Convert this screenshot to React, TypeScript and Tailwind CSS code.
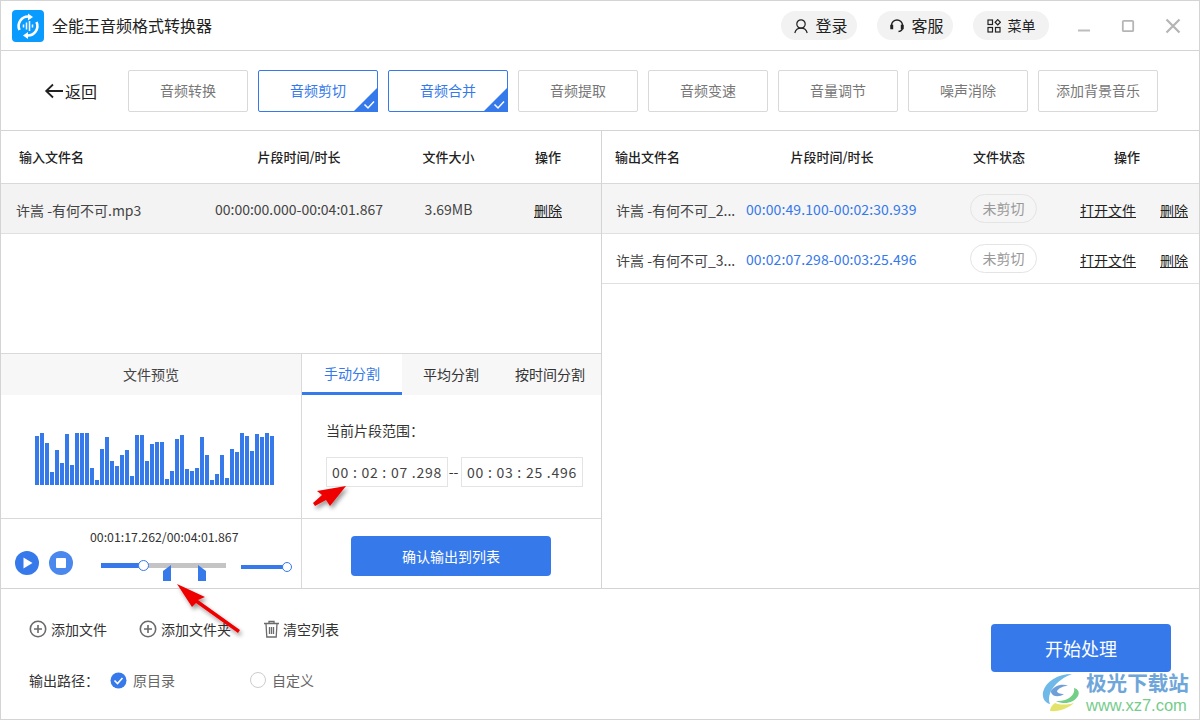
import React from "react";

const bars = [49,52,42,13,35,22,51,20,52,52,52,17,5,36,48,24,19,30,35,9,50,50,24,41,43,43,6,14,46,50,16,14,17,48,30,5,11,30,7,36,33,52,49,34,51,48,52,49];

const tools = [
  { t: "音频转换" },
  { t: "音频剪切", on: true },
  { t: "音频合并", on: true },
  { t: "音频提取" },
  { t: "音频变速" },
  { t: "音量调节" },
  { t: "噪声消除" },
  { t: "添加背景音乐" },
];

function Plus() {
  return (
    <svg width="18" height="18" viewBox="0 0 18 18" fill="none" stroke="#6b6b6b" strokeWidth="1.6">
      <circle cx="9" cy="9" r="7.7" />
      <path d="M9 5v8M5 9h8" />
    </svg>
  );
}

function Tool({ t, on }: { t: string; on?: boolean }) {
  return (
    <div className={`relative w-[120px] h-[42px] rounded-[2px] border flex items-center justify-center text-[14px] ${on ? "border-[#3579ea] text-[#3579ea]" : "border-[#d9d9d9] text-[#777777]"}`}>
      {t}
      {on && (
        <svg className="absolute right-[-1px] bottom-[-1px]" width="25" height="25" viewBox="0 0 25 25">
          <path d="M25 0V25H0Z" fill="#3579ea" />
          <path d="M11.5 17.5l3.5 3.5 6-6.5" fill="none" stroke="#ffffff" strokeWidth="1.5" />
        </svg>
      )}
    </div>
  );
}

function OutRow({ name, time, grey }: { name: string; time: string; grey?: boolean }) {
  return (
    <div className={`h-[50px] border-b border-[#e0e0e0] flex items-center text-[14px] text-[#444444] ${grey ? "bg-[#f5f5f5]" : "bg-white"}`}>
      <div className="w-[144px] pl-[14px] pt-[3px] whitespace-nowrap overflow-hidden">{name}</div>
      <div className="w-[176px] pt-[1px] text-[#3579ea] whitespace-nowrap tracking-[0.1px]">{time}</div>
      <div className="w-[154px] pl-[48px]">
        <span className="w-[67px] h-[29px] rounded-full border border-[#e4e4e4] text-[#999999] flex items-center justify-center">未剪切</span>
      </div>
      <div className="w-[64px] pt-[3px] text-center text-[#222222] underline whitespace-nowrap">打开文件</div>
      <div className="flex-1 pl-[20px] pt-[3px] text-[#222222] underline">删除</div>
    </div>
  );
}

function Pill({ icon, label, small }: { icon: React.ReactNode; label: string; small?: boolean }) {
  return (
    <div className={`w-[76px] h-[29px] rounded-full bg-[#f2f2f2] flex items-center justify-center text-[#222222] ${small ? "text-[14px] gap-[7px]" : "text-[16px] gap-[6px] pl-[3px]"}`}>
      {icon}
      <span className="-mt-[1px]">{label}</span>
    </div>
  );
}

export default function App() {
  return (
    <div
      className="relative w-[1200px] h-[720px] bg-white border border-[#d4d4d4] overflow-hidden flex flex-col text-[#333333]"
      style={{ fontFamily: '"Noto Sans CJK SC", "Liberation Sans", sans-serif' }}
    >
      {/* title bar */}
      <div className="h-[50px] shrink-0 border-b border-[#d4d4d4] flex items-center pl-[11px]">
        <svg width="32" height="32" viewBox="0 0 32 32">
          <rect width="32" height="32" rx="4" fill="#0a9bff" />
          <path d="M7.500 20A9.500 9.500 0 0 1 17 6.600" fill="none" stroke="#ffffff" strokeWidth="2.600" />
          <path d="M24.500 12A9.500 9.500 0 0 1 15 25.400" fill="none" stroke="#ffffff" strokeWidth="2.600" />
          <path d="M16 3.500l5 3.500-5 3.500Z" fill="#ffffff" />
          <path d="M16 22l-5 3.500 5 3.500Z" fill="#ffffff" />
          <path d="M11.500 14.500v3M14.500 12.500v7M17.500 11v10M20.500 14.500v3" stroke="#ffffff" strokeWidth="1.500" fill="none" />
        </svg>
        <div className="ml-[8px] -mt-[1px] text-[16px] text-[#222222]">全能王音频格式转换器</div>
        <div className="ml-auto flex items-center gap-[20px]">
          <Pill
            label="登录"
            icon={
              <svg width="16" height="16" viewBox="0 0 16 16" fill="none" stroke="#222222" strokeWidth="1.2">
                <circle cx="8" cy="6" r="4.2" />
                <path d="M1.8 15c.8-3.2 3-4.8 6.2-4.8s5.400 1.600 6.200 4.800" />
              </svg>
            }
          />
          <Pill
            label="客服"
            icon={
              <svg width="16" height="16" viewBox="0 0 16 16" fill="none" stroke="#222222" strokeWidth="1.4">
                <path d="M2.500 9.500V7.500a5.500 5.500 0 0 1 11 0v2c0 2.500-1.500 3.800-4 4" />
                <path d="M2 7.500h1.500v3H2zM12.500 7.500H14v3h-1.500z" fill="#222222" />
              </svg>
            }
          />
          <Pill
            small
            label="菜单"
            icon={
              <svg width="14" height="14" viewBox="0 0 14 14" fill="none" stroke="#222222" strokeWidth="1.2">
                <rect x="1" y="1" width="4.500" height="4.500" />
                <rect x="1" y="8.500" width="4.500" height="4.500" />
                <rect x="8.500" y="8.500" width="4.500" height="4.500" />
                <path d="M10.750 .6l2.650 2.650-2.650 2.650-2.650-2.650z" />
              </svg>
            }
          />
        </div>
        <div className="ml-[28px] mr-[18px] flex items-center gap-[30px]">
          <svg width="14" height="14" viewBox="0 0 14 14"><path d="M1 11.500h12" stroke="#bdbdbd" strokeWidth="2" /></svg>
          <svg width="14" height="14" viewBox="0 0 14 14" fill="none"><rect x="1.800" y="1.800" width="10.400" height="10.400" rx="1" stroke="#b5b5b5" strokeWidth="1.800" /></svg>
          <svg width="16" height="16" viewBox="0 0 16 16"><path d="M1.500 1.500l13 13M14.500 1.500l-13 13" stroke="#b5b5b5" strokeWidth="2.200" /></svg>
        </div>
      </div>

      {/* toolbar */}
      <div className="h-[80px] shrink-0 border-b border-[#d4d4d4] flex items-center">
        <div className="w-[127px] pl-[43px] flex items-center gap-[1px] text-[16px] text-[#222222]">
          <svg width="20" height="16" viewBox="0 0 20 16" fill="none" stroke="#222222" strokeWidth="1.800">
            <path d="M19 8H2M9 1.500L2.200 8 9 14.500" />
          </svg>
          <span>返回</span>
        </div>
        <div className="flex gap-[10px]">
          {tools.map((x) => (
            <Tool key={x.t} t={x.t} on={x.on} />
          ))}
        </div>
      </div>

      {/* main */}
      <div className="h-[458px] shrink-0 border-b border-[#d4d4d4] flex">
        {/* left */}
        <div className="w-[601px] shrink-0 border-r border-[#d4d4d4] flex flex-col">
          <div className="h-[53px] shrink-0 border-b border-[#d9d9d9] grid grid-cols-[198px_200px_99px_1fr] items-center text-[13px] font-medium text-[#222222]">
            <div className="pl-[18px]">输入文件名</div>
            <div className="text-center">片段时间/时长</div>
            <div className="text-center">文件大小</div>
            <div className="text-center pr-[3px]">操作</div>
          </div>
          <div className="h-[50px] shrink-0 border-b border-[#e0e0e0] bg-[#f3f3f3] grid grid-cols-[198px_200px_99px_1fr] items-center text-[14px] text-[#444444]">
            <div className="pl-[15px] pt-[3px] whitespace-nowrap">许嵩 -有何不可.mp3</div>
            <div className="text-center whitespace-nowrap pt-[1px]">00:00:00.000-00:04:01.867</div>
            <div className="text-center pt-[1px]">3.69MB</div>
            <div className="text-center text-[#222222] underline pt-[3px] pr-[3px]">删除</div>
          </div>
          <div className="flex-1" />
          {/* lower panels */}
          <div className="h-[235px] shrink-0 border-t border-[#d9d9d9] flex">
            <div className="w-[301px] shrink-0 border-r border-[#d9d9d9] flex flex-col">
              <div className="h-[41px] shrink-0 bg-[#f7f7f7] flex items-center justify-center text-[14px] text-[#444444]">文件预览</div>
              <div className="h-[124px] shrink-0 border-b border-[#d9d9d9] flex items-end pl-[34px] pb-[33px] gap-px">
                {bars.map((h, i) => (
                  <div key={i} className="w-[4px] bg-[#3579ea]" style={{ height: h }} />
                ))}
              </div>
              <div className="flex-1 relative">
                <div className="pt-[10px] pl-[89px] text-[12.33px] leading-[17px] text-[#333333]">00:01:17.262/00:04:01.867</div>
                <div className="flex items-center pl-[14px] pt-[5px]">
                  <svg width="24" height="24" viewBox="0 0 24 24">
                    <circle cx="12" cy="12" r="12" fill="#3579ea" />
                    <path d="M8.500 6.500l9 5.500-9 5.500Z" fill="#ffffff" />
                  </svg>
                  <svg className="ml-[10px]" width="24" height="24" viewBox="0 0 24 24">
                    <circle cx="12" cy="12" r="12" fill="#4a88ee" />
                    <rect x="7" y="7" width="10" height="10" rx="1" fill="#ffffff" />
                  </svg>
                  <div className="relative ml-[28px] mt-[5px] w-[125px] h-[5px] bg-[#c4c4c4]">
                    <div className="w-[42px] h-full bg-[#3579ea]" />
                    <div className="absolute left-[37px] top-[-3px] w-[11px] h-[11px] rounded-full bg-white border border-[#3579ea]" />
                    <svg className="absolute left-[62px] top-[2px]" width="8" height="16" viewBox="0 0 8 16"><path d="M8 0V16H0V6Z" fill="#3579ea" /></svg>
                    <svg className="absolute left-[97px] top-[2px]" width="8" height="16" viewBox="0 0 8 16"><path d="M0 0V16H8V6Z" fill="#3579ea" /></svg>
                  </div>
                  <div className="relative ml-[15px] mt-[8px] w-[46px] h-[4px] bg-[#3579ea]">
                    <div className="absolute right-[-5px] top-[-3px] w-[10px] h-[10px] rounded-full bg-white border border-[#3579ea]" />
                  </div>
                </div>
              </div>
            </div>
            <div className="flex-1 flex flex-col min-w-0">
              <div className="h-[41px] shrink-0 flex text-[14px] text-[#333333]">
                <div className="w-[100px] bg-white border-b-[3px] border-[#3579ea] text-[#3579ea] flex items-center justify-center">手动分割</div>
                <div className="flex-1 bg-[#f7f7f7] flex items-center">
                  <div className="w-[98px] text-center">平均分割</div>
                  <div className="flex-1 text-center whitespace-nowrap pr-[1px]">按时间分割</div>
                </div>
              </div>
              <div className="h-[124px] shrink-0 border-b border-[#d9d9d9] pl-[24px] pt-[25px]">
                <div className="text-[14px] leading-[20px] text-[#333333]">当前片段范围：</div>
                <div className="mt-[17px] flex items-center text-[14px] text-[#444444]">
                  <div className="w-[122px] h-[30px] border border-[#e4e4e4] flex items-center justify-center whitespace-nowrap tracking-[0.75px]">00 : 02 : 07 .298</div>
                  <div className="w-[13px] pr-[2px] -mt-[3px] text-center text-[#333333] leading-none">--</div>
                  <div className="w-[122px] h-[30px] border border-[#e4e4e4] flex items-center justify-center whitespace-nowrap tracking-[0.75px]">00 : 03 : 25 .496</div>
                </div>
              </div>
              <div className="flex-1 flex items-center justify-center pt-[5px] pr-[1px]">
                <div className="w-[200px] h-[40px] rounded-[4px] bg-[#3579ea] text-white text-[14px] flex items-center justify-center">确认输出到列表</div>
              </div>
            </div>
          </div>
        </div>

        {/* right */}
        <div className="flex-1 min-w-0 flex flex-col">
          <div className="h-[53px] shrink-0 border-b border-[#d9d9d9] flex items-center text-[13px] font-medium text-[#222222]">
            <div className="w-[144px] pl-[13px]">输出文件名</div>
            <div className="w-[172px] text-center">片段时间/时长</div>
            <div className="w-[162px] text-center">文件状态</div>
            <div className="w-[94px] text-center">操作</div>
          </div>
          <OutRow grey name="许嵩 -有何不可_2..." time="00:00:49.100-00:02:30.939" />
          <OutRow name="许嵩 -有何不可_3..." time="00:02:07.298-00:03:25.496" />
        </div>
      </div>

      {/* footer */}
      <div className="flex-1 relative flex">
        <div className="flex-1 pl-[28px] pt-[30px]">
          <div className="flex items-center h-[20px] text-[14px] text-[#333333]">
            <div className="flex items-center gap-[4px] w-[110px]"><Plus /><span>添加文件</span></div>
            <div className="flex items-center gap-[4px] w-[124px]"><Plus /><span>添加文件夹</span></div>
            <div className="flex items-center gap-[3px]">
              <svg width="17" height="18" viewBox="0 0 17 18" fill="none" stroke="#6b6b6b" strokeWidth="1.300">
                <path d="M1 3.500h15M6 3.500V1.500h5v2M3 3.500l.8 13.500h9.400L14 3.500M6.500 7v7M8.500 7v7M10.500 7v7" />
              </svg>
              <span>清空列表</span>
            </div>
          </div>
          <div className="mt-[31px] flex items-center h-[20px] text-[14px]">
            <div className="w-[81px] text-[#333333]">输出路径：</div>
            <svg width="17" height="17" viewBox="0 0 17 17">
              <circle cx="8.500" cy="8.500" r="8" fill="#3579ea" />
              <path d="M4.500 8.500l3 3 5-5.500" fill="none" stroke="#ffffff" strokeWidth="1.600" />
            </svg>
            <span className="ml-[6px] w-[117px] text-[#666666]">原目录</span>
            <div className="w-[16px] h-[16px] rounded-full border border-[#cccccc]" />
            <span className="ml-[6px] text-[#666666]">自定义</span>
          </div>
        </div>
        <div className="pr-[28px] pt-[35px]">
          <div className="w-[180px] h-[48px] rounded-[4px] bg-[#3579ea] text-white text-[18px] flex items-center justify-center">开始处理</div>
        </div>
      </div>

      {/* annotation arrows */}
      <svg className="absolute left-[-1px] top-[-1px] pointer-events-none" width="1200" height="720" viewBox="0 0 1200 720">
        <defs>
          <filter id="sh" x="-30%" y="-30%" width="160%" height="160%">
            <feDropShadow dx="2" dy="3" stdDeviation="2" floodColor="#000000" floodOpacity="0.4" />
          </filter>
        </defs>
        <path d="M346 486L330 506 326 500 315 506 313 503 322 495 317 491Z" fill="#ee0000" filter="url(#sh)" />
        <path d="M177 584L205 597 198 600 240 630 238 633 196 603 192 607Z" fill="#ee0000" filter="url(#sh)" />
      </svg>

      {/* watermark */}
      <div className="absolute left-[1041px] top-[670px] flex items-start pointer-events-none">
        <svg width="44" height="42" viewBox="0 0 44 42">
          <path d="M30 3C16 3 4 10 1 21c-1 6 2 11 7 12C4 22 14 9 30 3Z" fill="#6fb9e8" />
          <path d="M14 30c8 4 18 2 22-5 2-4 0-7-4-8 2 7-7 14-18 13Z" fill="#74cf86" />
          <path d="M8 40c10 1 18-3 24-8-7 2-14 2-19 0-3 2-5 5-5 8Z" fill="#e3e36c" />
          <path d="M9 20c3-5 11-8 17-5-5 0-9 2-11 5 0 2 3 3 7 3-4 3-10 3-12 0-1-1-1-2-1-3Z" fill="#6f9fd8" />
        </svg>
        <div className="flex flex-col -mt-[1px]">
          <span className="text-[20.6px] leading-[24px] font-bold text-[#6ea6da] whitespace-nowrap">极光下载站</span>
          <span className="mt-[2px] text-[16.5px] leading-[18px] text-[#76cc8c] whitespace-nowrap" style={{ fontFamily: '"Liberation Sans", sans-serif' }}>www.xz7.com</span>
        </div>
      </div>
    </div>
  );
}
